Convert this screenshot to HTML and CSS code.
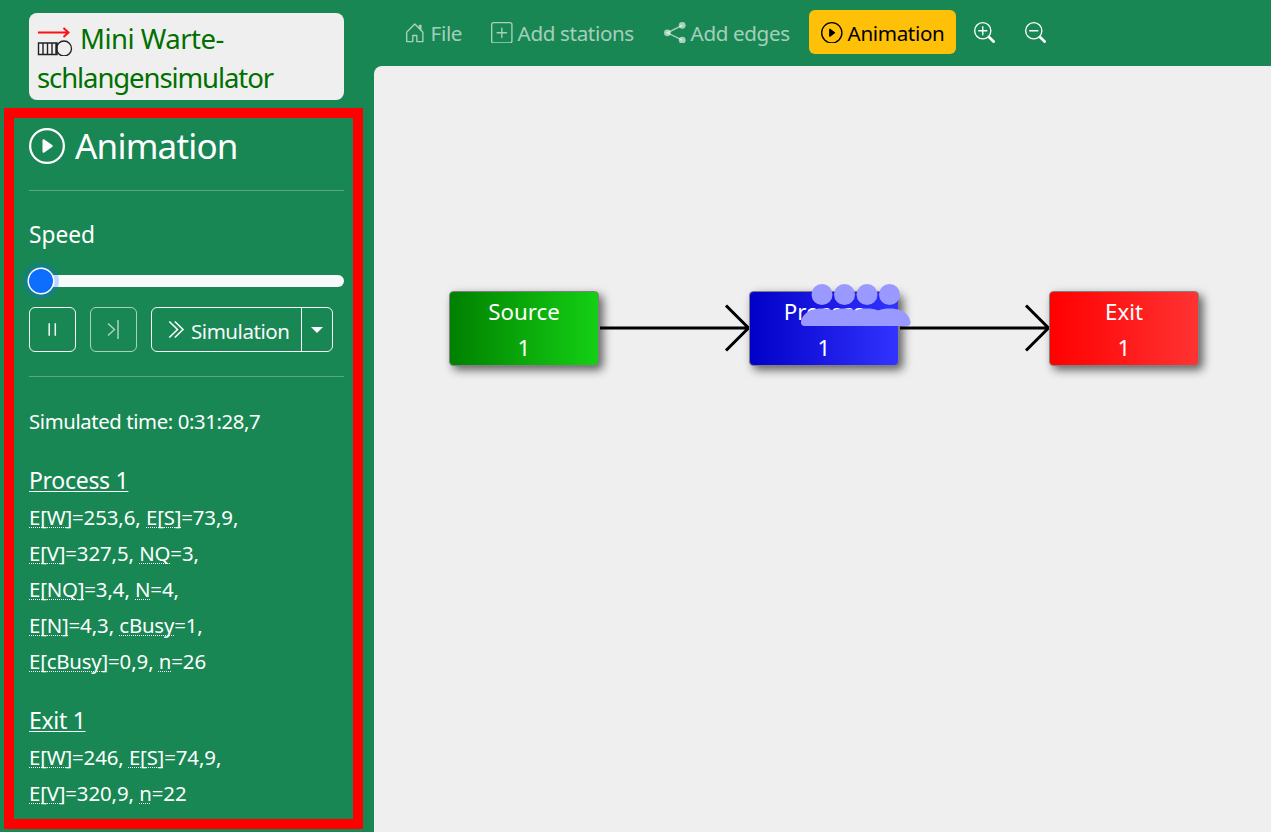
FILE: index.html
```html
<!DOCTYPE html>
<html lang="en">
<head>
<meta charset="utf-8">
<title>Mini Warteschlangensimulator</title>
<link rel="stylesheet" href="styles.css">
</head>
<body>
<div class="app">
  <aside class="sidebar">
    <div class="brand">
      <svg class="logo" viewBox="0 0 36 30" fill="none">
        <path d="M1 6.500H31M26.500 2L31.500 6.500L26.500 11" stroke="#ff1010" stroke-width="1.900"/>
        <path d="M1.500 17H20V28.500H1.500ZM6 17V28.500M10.500 17V28.500M15 17V28.500M19 17V28.500" stroke="#222" stroke-width="1.400"/>
        <circle cx="27" cy="22.500" r="7.500" stroke="#222" stroke-width="1.300"/>
      </svg><span class="brand-a">Mini Warte-</span><br><span class="brand-b">schlangensimulator</span>
    </div>
    <section class="panel">
      <h1 class="heading">
        <svg class="heading-icon" viewBox="0 0 16 16" fill="currentColor"><path d="M8 15A7 7 0 1 1 8 1a7 7 0 0 1 0 14zm0 1A8 8 0 1 0 8 0a8 8 0 0 0 0 16z"/><path d="M6.271 5.055a.5.5 0 0 1 .520.038l3.500 2.500a.5.5 0 0 1 0 .814l-3.500 2.500A.5.5 0 0 1 6 10.500v-5a.5.5 0 0 1 .271-.445z"/></svg>
        <span>Animation</span>
      </h1>
      <div class="rule"></div>
      <div class="label"><span>Speed</span></div>
      <div class="slider"><div class="thumb"></div></div>
      <div class="buttons">
        <button class="btn square"><svg class="btn-icon" viewBox="0 0 21 21" stroke="currentColor" stroke-width="1.500"><path d="M7.200 4.300V16.800M13.300 4.300V16.800"/></svg></button>
        <button class="btn square disabled"><svg class="btn-icon" viewBox="0 0 21 21" fill="none" stroke="currentColor" stroke-width="1.500"><path d="M5 4.500L11.500 10.500L5 16.500M15 1V20"/></svg></button>
        <div class="group">
          <button class="btn main"><svg class="btn-icon" viewBox="0 0 21 21" fill="none" stroke="currentColor" stroke-width="1.600"><path d="M3.300 2.500L11.500 10.500L3.300 18.500M8.800 2.500L17 10.500L8.800 18.500"/></svg><span class="sim">Simulation</span></button>
          <button class="btn drop"><span class="caret"></span></button>
        </div>
      </div>
      <div class="rule second"></div>
      <p class="time"><span>Simulated time: 0:31:28,7</span></p>
      <h2 class="station"><u class="p1">Process 1</u></h2>
      <div class="stats">
        <div><abbr>E[W]</abbr>=253,6, <abbr>E[S]</abbr>=73,9,</div>
        <div><abbr>E[V]</abbr>=327,5, <abbr>NQ</abbr>=3,</div>
        <div><abbr>E[NQ]</abbr>=3,4, <abbr>N</abbr>=4,</div>
        <div><abbr>E[N]</abbr>=4,3, <abbr>cBusy</abbr>=1,</div>
        <div><abbr>E[cBusy]</abbr>=0,9, <abbr>n</abbr>=26</div>
      </div>
      <h2 class="station next"><u>Exit 1</u></h2>
      <div class="stats">
        <div><abbr>E[W]</abbr>=246, <abbr>E[S]</abbr>=74,9,</div>
        <div><abbr>E[V]</abbr>=320,9, <abbr>n</abbr>=22</div>
      </div>
    </section>
  </aside>
  <main class="main-area">
    <nav class="toolbar">
      <a class="item file"><svg class="icon" viewBox="0 0 16 16" fill="currentColor"><path d="M8.354 1.146a.5.5 0 0 0-.708 0l-6 6A.5.5 0 0 0 1.500 7.500v7a.5.5 0 0 0 .5.5h4.500a.5.5 0 0 0 .5-.5v-4h2v4a.5.5 0 0 0 .5.5H14a.5.5 0 0 0 .5-.5v-7a.5.5 0 0 0-.146-.354L13 5.793V2.500a.5.5 0 0 0-.5-.5h-1a.5.5 0 0 0-.5.5v1.293L8.354 1.146zM2.500 14V7.707l5.500-5.500 5.500 5.500V14H10v-4a.5.5 0 0 0-.5-.5h-3a.5.5 0 0 0-.5.5v4H2.500z"/></svg><span>File</span></a>
      <a class="item stations"><svg class="icon" viewBox="0 0 16 16" fill="currentColor"><path d="M14 1a1 1 0 0 1 1 1v12a1 1 0 0 1-1 1H2a1 1 0 0 1-1-1V2a1 1 0 0 1 1-1h12zM2 0a2 2 0 0 0-2 2v12a2 2 0 0 0 2 2h12a2 2 0 0 0 2-2V2a2 2 0 0 0-2-2H2z"/><path d="M8 4a.5.5 0 0 1 .5.5v3h3a.5.5 0 0 1 0 1h-3v3a.5.5 0 0 1-1 0v-3h-3a.5.5 0 0 1 0-1h3v-3A.5.5 0 0 1 8 4z"/></svg><span>Add stations</span></a>
      <a class="item edges"><svg class="icon" viewBox="0 0 16 16"><path d="M13.500 2.500L2.500 8L13.500 13.500" fill="none" stroke="currentColor"/><g fill="currentColor"><circle cx="13.500" cy="2.500" r="2.500"/><circle cx="2.500" cy="8" r="2.500"/><circle cx="13.500" cy="13.500" r="2.500"/></g></svg><span>Add edges</span></a>
      <a class="item active"><svg class="icon" viewBox="0 0 16 16" fill="currentColor"><path d="M8 15A7 7 0 1 1 8 1a7 7 0 0 1 0 14zm0 1A8 8 0 1 0 8 0a8 8 0 0 0 0 16z"/><path d="M6.271 5.055a.5.5 0 0 1 .520.038l3.500 2.500a.5.5 0 0 1 0 .814l-3.500 2.500A.5.5 0 0 1 6 10.500v-5a.5.5 0 0 1 .271-.445z"/></svg><span>Animation</span></a>
      <a class="item zoom-in"><svg class="icon" viewBox="0 0 16 16" fill="none" stroke="currentColor"><circle cx="6.500" cy="6.500" r="6"/><path d="M3.500 6.500H9.500M6.500 3.500V9.500" stroke-linecap="round"/><path d="M10.900 10.900L15.200 15.200" stroke-width="2"/></svg></a>
      <a class="item zoom-out"><svg class="icon" viewBox="0 0 16 16" fill="none" stroke="currentColor"><circle cx="6.500" cy="6.500" r="6"/><path d="M3.500 6.500H9.500" stroke-linecap="round"/><path d="M10.900 10.900L15.200 15.200" stroke-width="2"/></svg></a>
    </nav>
    <div class="surface">
      <svg class="model" viewBox="374 66 897 766">
        <defs>
          <linearGradient id="source"><stop stop-color="#008000"/><stop offset="1" stop-color="#14d014"/></linearGradient>
          <linearGradient id="process"><stop stop-color="#0000c8"/><stop offset="1" stop-color="#3333ff"/></linearGradient>
          <linearGradient id="exit"><stop stop-color="#ff0000"/><stop offset="1" stop-color="#ff3333"/></linearGradient>
          <path id="body" d="M3 14s-1 0-1-1 1-4 6-4 6 3 6 4-1 1-1 1H3zm5-6a3 3 0 1 0 0-6 3 3 0 0 0 0 6z"/>
        </defs>
        <g class="arrow"><path d="M600 328H748M726 305.500L748.500 328L726 350.500"/><path d="M900 328H1048M1026 305.500L1048.500 328L1026 350.500"/></g>
        <g class="box">
          <rect x="449.500" y="291.500" width="149" height="74" rx="4" fill="url(#source)"/>
          <rect x="749.500" y="291.500" width="149" height="74" rx="4" fill="url(#process)"/>
          <rect x="1049.500" y="291.500" width="149" height="74" rx="4" fill="url(#exit)"/>
        </g>
        <g class="caption">
          <text x="524" y="320">Source</text><text x="524" y="356">1</text>
          <text x="824" y="320">Process</text><text x="824" y="356">1</text>
          <text x="1124" y="320">Exit</text><text x="1124" y="356">1</text>
        </g>
        <g class="clients">
          <use href="#body" transform="translate(794 277) scale(3.500)"/>
          <use href="#body" transform="translate(816.500 277) scale(3.500)"/>
          <use href="#body" transform="translate(839 277) scale(3.500)"/>
          <use href="#body" transform="translate(861.500 277) scale(3.500)"/>
        </g>
      </svg>
    </div>
  </main>
</div>
</body>
</html>
```
FILE: styles.css
```css
* { box-sizing: border-box; }
body { margin: 0; background: #198754; color: #fff; font-family: "Noto Sans", sans-serif; font-size: 21px; overflow: hidden; }
h1, h2, p { margin: 0; font-weight: 400; }
svg { display: block; flex: none; }
span { white-space: nowrap; }
.app { display: flex; width: 1271px; height: 832px; }
.sidebar { width: 374px; flex: none; padding: 13px 11px 0 4px; }
.brand { width: 315px; height: 87px; margin-left: 25px; padding: 6px 8px; border-radius: 8px; background: #efefef; color: #007000; font-size: 27.500px; line-height: 39px; }
.logo { display: inline-block; width: 36px; height: 30px; margin-right: 7px; vertical-align: -6.500px; }
.brand-a { letter-spacing: -0.500px; }
.brand-b { letter-spacing: -1.100px; }
.panel { width: 359px; height: 721px; margin-top: 8px; padding: 0 9px 0 15px; border: 10px solid #f00; }
.heading { display: flex; align-items: center; gap: 10px; height: 72px; padding-bottom: 16px; font-size: 35px; line-height: 56px; letter-spacing: -0.800px; }
.heading-icon { width: 36px; height: 36px; }
.rule { height: 1px; background: rgba(255, 255, 255, .28); }
.label { height: 84px; padding-top: 26px; font-size: 22.700px; line-height: 36px; }
.slider { display: flex; height: 12px; border-radius: 6px; background: #f8f9fa; }
.thumb { width: 24px; height: 24px; margin-top: -6px; border-radius: 50%; background: #0d6efd; box-shadow: 0 0 0 1.500px #fff, 0 0 0 6px rgba(13, 110, 253, .25); }
.buttons { display: flex; gap: 14px; margin-top: 20px; height: 45px; }
.btn { display: flex; align-items: center; justify-content: center; height: 45px; padding: 0; border: 1px solid #f8f9fa; border-radius: 6px; background: none; color: #f8f9fa; font: 20.500px/28px "Noto Sans", sans-serif; }
.square { width: 47px; }
.disabled { opacity: .65; }
.btn-icon { width: 21px; height: 21px; }
.group { display: flex; }
.main { width: 151px; justify-content: flex-start; gap: 4px; padding-left: 14px; border-radius: 6px 0 0 6px; }
.sim { padding-top: 3px; letter-spacing: -0.450px; }
.drop { width: 32px; margin-left: -1px; border-radius: 0 6px 6px 0; }
.caret { border: 6px solid transparent; border-top-color: #fff; border-bottom: 0; }
.second { margin-top: 24px; }
.time { margin-top: 26px; font-size: 20.300px; line-height: 36px; letter-spacing: -0.370px; }
.station { margin-top: 23px; font-size: 23px; line-height: 36px; height: 37px; letter-spacing: -0.300px; }
.next { margin-top: 23px; }
u { text-decoration-thickness: 1px; text-underline-offset: 2px; }
.stats { font-size: 20.400px; line-height: 36px; letter-spacing: -0.060px; white-space: nowrap; }
abbr { letter-spacing: -0.200px; text-decoration: underline dotted 1px; text-underline-offset: 2px; text-decoration-skip-ink: none; }
.main-area { flex: 1; min-width: 0; display: flex; flex-direction: column; }
.toolbar { display: flex; align-items: center; height: 66px; padding: 0 0 2px 30px; }
.item { display: flex; align-items: center; gap: 5px; height: 44px; padding-top: 1px; color: rgba(255, 255, 255, .62); font-size: 20.600px; letter-spacing: -0.350px; }
.icon { width: 21.600px; height: 21.600px; }
.file { width: 87px; }
.file, .stations, .edges { padding-left: 0; }
.stations { width: 173px; }
.edges { width: 145px; }
.active { width: 147px; padding-left: 12px; border-radius: 6px; background: #ffc107; color: #000; }
.zoom-in { width: 51px; margin-left: 17.500px; color: #fff; }
.zoom-out { color: #fff; }
.surface { flex: 1; border-top-left-radius: 8px; background: #efefef; overflow: hidden; }
.model { width: 897px; height: 766px; }
.box rect { stroke: #808080; stroke-width: 1px; filter: drop-shadow(4px 4px 5px rgba(0, 0, 0, .6)); }
.arrow { fill: none; stroke: #000; stroke-width: 3px; }
.caption { fill: #fff; font-size: 22.300px; text-anchor: middle; }
.clients { fill: #9999ff; }
```
